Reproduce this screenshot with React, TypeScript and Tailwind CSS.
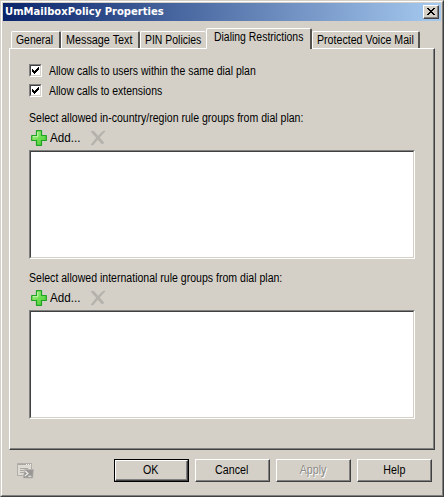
import React from 'react';

const textFont = "font-['Liberation_Sans',Arial,sans-serif] text-[12px] leading-[15px] whitespace-nowrap";

function Label({ children, className = '' }: { children: React.ReactNode; className?: string }) {
  return <span className={`block ${textFont} ${className}`}>{children}</span>;
}

function Tab({ label, width, scale, edge = true }: { label: string; width: string; scale: string; edge?: boolean }) {
  return (
    <div className={`h-[17px] ${width} rounded-t-[2px] border-t border-l border-t-white border-l-white pl-[4px] pt-[1px] ${edge ? 'border-r-2 border-r-[#55534f]' : ''}`}>
      <Label className={`origin-left ${scale}`}>{label}</Label>
    </div>
  );
}

function Check({ label, scale }: { label: string; scale: string }) {
  return (
    <label className="flex h-[13px] items-center">
      <span className="h-[13px] w-[13px] shrink-0 border border-t-[#808080] border-l-[#808080] border-r-white border-b-white">
        <span className="block h-[11px] w-[11px] border border-t-[#404040] border-l-[#404040] border-r-[#d4d0c8] border-b-[#d4d0c8] bg-white">
          <svg width="9" height="9" viewBox="0 0 9 9" shapeRendering="crispEdges">
            <path d="M1 3h1v1h1v1h1V4h1V3h1V2h1V1h1v3H7v1H6v1H5v1H4v1H3V7H2V6H1z" fill="#000" />
          </svg>
        </span>
      </span>
      <Label className={`mt-[2px] ml-[7px] origin-left ${scale}`}>{label}</Label>
    </label>
  );
}

function PlusIcon() {
  return (
    <svg className="shrink-0" width="16" height="16" viewBox="0 0 16 16">
      <defs>
        <linearGradient id="plusGreen" x1="0" y1="0" x2="1" y2="1">
          <stop offset="0" stopColor="#b4f08c" />
          <stop offset="0.55" stopColor="#6cdc50" />
          <stop offset="1" stopColor="#44cc34" />
        </linearGradient>
      </defs>
      <path d="M5.5.7h5v4.8h4.8v5h-4.8v4.8h-5v-4.8H.7v-5h4.8z" fill="url(#plusGreen)" stroke="#1fa322" strokeWidth="1.2" strokeLinejoin="round" />
      <path d="M6.7 2v4.7H2" fill="none" stroke="#cdf7b4" strokeWidth="0.9" />
    </svg>
  );
}

function RemoveIcon() {
  return (
    <svg className="ml-[10px] shrink-0" width="16" height="16" viewBox="0 0 16 16">
      <path d="M.6 1.6C1.8.5 3.6.6 4.6 1.8l3.5 3.9 4.3-4.1C13.5.7 15 .6 15.6 1L9.7 7.5l4.8 5.6c-1.3 1.2-3 1-3.9-.1L7.8 9.8l-4.1 4.6c-1 1-2.6 1.1-3 .4l5.5-7z" fill="#b5b2ac" />
    </svg>
  );
}

function RuleGroup({ label, scale }: { label: string; scale: string }) {
  return (
    <section className="h-[160px]">
      <Label className={`origin-left ${scale}`}>{label}</Label>
      <div className="mt-[4px] ml-[2px] flex h-[16px] items-center">
        <PlusIcon />
        <Label className="ml-[3px] w-[30px] origin-left scale-x-[0.97]">Add...</Label>
        <RemoveIcon />
      </div>
      <div className="mt-[4px] h-[109px] w-[386px] border border-t-[#808080] border-l-[#808080] border-r-white border-b-white">
        <div className="h-full border border-t-[#404040] border-l-[#404040] border-r-[#d4d0c8] border-b-[#d4d0c8] bg-white" />
      </div>
    </section>
  );
}

function Button({ label, primary = false, disabled = false }: { label: string; primary?: boolean; disabled?: boolean }) {
  return (
    <button disabled={disabled} className={`h-[23px] w-[75px] shrink-0 ${primary ? 'border border-black' : ''}`}>
      <span className="block h-full border border-t-white border-l-white border-r-[#404040] border-b-[#404040]">
        <span className="flex h-full items-center justify-center border-r border-b border-[#808080]">
          <Label className={`mt-px scale-x-[0.89] ${disabled ? 'text-[#8c8a85] [text-shadow:1px_1px_0_#fff]' : ''}`}>{label}</Label>
        </span>
      </span>
    </button>
  );
}

function ScriptIcon() {
  return (
    <svg width="17" height="17" viewBox="0 0 17 17">
      <rect x=".5" y="1.5" width="14" height="12" fill="#dedbd5" stroke="#b2afab" />
      <path d="M1 2.5h13" stroke="#aaa7a3" />
      <path d="M9 2.5h1m1 0h1m1 0h1" stroke="#f4f2ee" />
      <path d="M3 6.5h8M3 8.5h4M3 10.5h4" stroke="#aaa7a3" />
      <path d="M7.7 7.5h8.8l-.7 8.5H6.2z" fill="#9a9896" stroke="#b7b4b0" strokeWidth=".6" />
      <path d="m8.3 9 2.7 2.5-3.2 2.6M11.3 14.2h3" fill="none" stroke="#f4f3f0" strokeWidth="1.1" />
    </svg>
  );
}

export default function App() {
  return (
    <main className="h-[497px] w-[444px] overflow-hidden border border-t-[#d4d0c8] border-l-[#d4d0c8] border-r-[#404040] border-b-[#404040] bg-[#d4d0c8] text-black">
      <div className="h-full border border-t-white border-l-white border-r-[#808080] border-b-[#808080] p-px">
        <header className="flex h-[18px] items-center justify-between bg-linear-to-r/srgb from-[#0a246a] to-[#a6caf0] pr-[2px] pl-[2px]">
          <span className="origin-left scale-x-[1.012] text-[11px] leading-[18px] font-bold whitespace-nowrap text-white font-['DejaVu_Sans_Condensed','DejaVu_Sans',sans-serif]">UmMailboxPolicy Properties</span>
          <button className="h-[14px] w-[16px] border border-t-white border-l-white border-r-[#404040] border-b-[#404040] bg-[#d4d0c8]">
            <span className="flex h-full items-center justify-center border-r border-b border-[#808080]">
              <svg width="8" height="7" viewBox="0 0 8 7" shapeRendering="crispEdges">
                <path d="M0 0h2v1h1v1h2V1h1V0h2v1H7v1H6v1H5v1h1v1h1v1h1v1H6V6H5V5H3v1H2v1H0V6h1V5h1V4h1V3H2V2H1V1H0z" />
              </svg>
            </span>
          </button>
        </header>
        <nav className="mt-[7px] ml-[8px] flex h-[20px] items-end">
          <Tab label="General" width="w-[50px]" scale="scale-x-[0.87]" />
          <Tab label="Message Text" width="w-[79px]" scale="scale-x-[0.9]" />
          <Tab label="PIN Policies" width="w-[66px]" scale="scale-x-[0.87]" edge={false} />
          <div className="z-10 -mb-px h-[21px] w-[106px] rounded-t-[2px] border-t border-l border-t-white border-l-white border-r-2 border-r-[#55534f] bg-[#d4d0c8] pt-[1px] pl-[7px]">
            <Label className="origin-left scale-x-[0.87]">Dialing Restrictions</Label>
          </div>
          <Tab label="Protected Voice Mail" width="w-[108px]" scale="scale-x-[0.885]" />
        </nav>
        <div className="ml-[6px] h-[402px] w-[426px] border border-t-white border-l-white border-r-[#404040] border-b-[#404040]">
          <div className="h-full border-r border-b border-[#808080] pt-[15px] pl-[19px]">
            <div className="flex flex-col gap-[7px]">
              <Check label="Allow calls to users within the same dial plan" scale="scale-x-[0.873]" />
              <Check label="Allow calls to extensions" scale="scale-x-[0.87]" />
            </div>
            <div className="mt-[14px]">
              <RuleGroup label="Select allowed in-country/region rule groups from dial plan:" scale="scale-x-[0.879]" />
              <RuleGroup label="Select allowed international rule groups from dial plan:" scale="scale-x-[0.879]" />
            </div>
          </div>
        </div>
        <footer className="mt-[9px] ml-[14px] flex h-[23px] items-center">
          <ScriptIcon />
          <div className="ml-[80px] flex gap-[6px]">
            <Button label="OK" primary />
            <Button label="Cancel" />
            <Button label="Apply" disabled />
            <Button label="Help" />
          </div>
        </footer>
      </div>
    </main>
  );
}
